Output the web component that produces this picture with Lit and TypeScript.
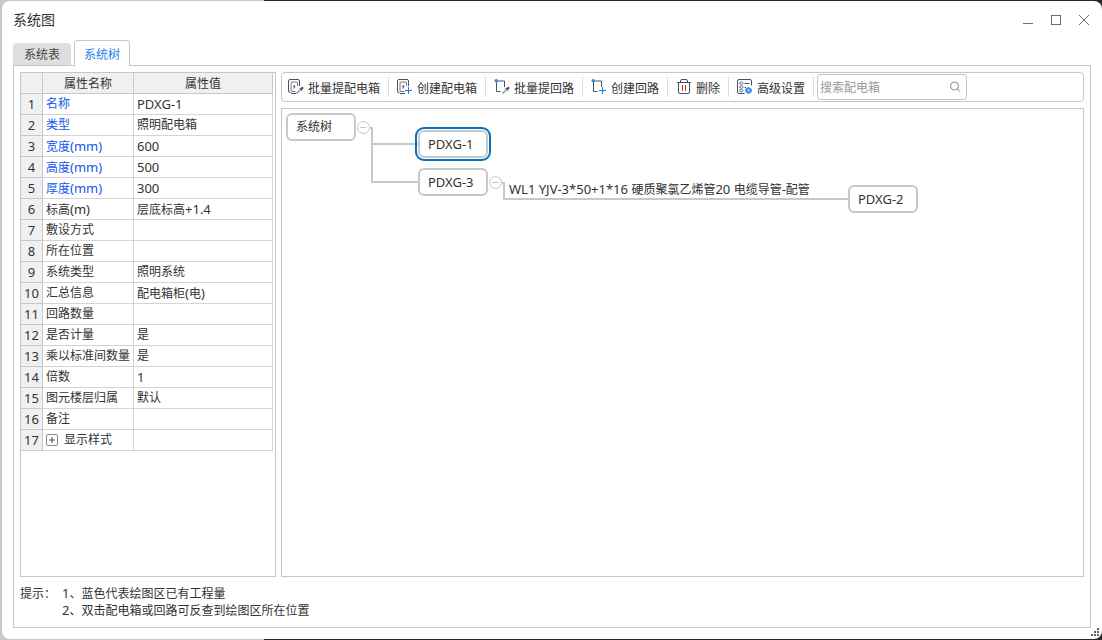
import { LitElement, html, svg, css } from "lit";
import { customElement, property, state } from "lit/decorators.js";

/** Splits mixed text so that Latin runs get their own, slightly larger size. */
function mixed(text: string) {
  return text
    .split(/([\x20-\x7e]+)/)
    .filter((part) => part !== "")
    .map((part) => (/^[\x20-\x7e]/.test(part) ? html`<span class="latin">${part}</span>` : part));
}

const latin = css`
  .latin {
    font-size: 13px;
  }
`;

interface PropertyRow {
  name: string;
  value: string;
  key?: boolean;
  group?: boolean;
}

const rows: PropertyRow[] = [
  { name: "名称", value: "PDXG-1", key: true },
  { name: "类型", value: "照明配电箱", key: true },
  { name: "宽度(mm)", value: "600", key: true },
  { name: "高度(mm)", value: "500", key: true },
  { name: "厚度(mm)", value: "300", key: true },
  { name: "标高(m)", value: "层底标高+1.4" },
  { name: "敷设方式", value: "" },
  { name: "所在位置", value: "" },
  { name: "系统类型", value: "照明系统" },
  { name: "汇总信息", value: "配电箱柜(电)" },
  { name: "回路数量", value: "" },
  { name: "是否计量", value: "是" },
  { name: "乘以标准间数量", value: "是" },
  { name: "倍数", value: "1" },
  { name: "图元楼层归属", value: "默认" },
  { name: "备注", value: "" },
  { name: "显示样式", value: "", group: true },
];

const boxShape = svg`
  <path d="M2.5 13.5H2Q.5 13.5 .5 12V2Q.5 .5 2 .5H10Q11.5 .5 11.5 2V7M3 14.5H8" />
  <path class="thin" d="M7.5 12.5H4Q3 12.5 3 11.5V4Q3 3 4 3H8.5Q9.5 3 9.5 4V7" />
  <path class="solid" d="M6.8 5.2 4.6 8H6L5.4 10.4 7.8 7.4H6.4Z" />`;
const circuitShape = svg`
  <path d="M2.5 2H10.5V8M2.5 2V12.5H6.5" />
  <circle class="dot" cx="2.2" cy="1.8" r="1.8" />`;
const picker = svg`
  <path class="grey" d="M8.4 14.6 12 11" />
  <path class="solid" d="M10.4 8.8 12.2 9.4 14.2 7.4 15.8 9 13.8 11 14.4 12.8Z" />`;
const plus = svg`<path class="blue" d="M11.5 8V15M8 11.5H15" />`;

const icons = {
  pickBox: svg`${boxShape}${picker}`,
  newBox: svg`${boxShape}${plus}`,
  pickCircuit: svg`${circuitShape}${picker}`,
  newCircuit: svg`${circuitShape}${plus}`,
  remove: svg`
    <path d="M1 3.5H15M4.5 3.5V2Q4.5 .5 6 .5H10Q11.5 .5 11.5 2V3.5M2.5 3.5V13Q2.5 14.5 4 14.5H12Q13.5 14.5 13.5 13V3.5" />
    <path class="red" d="M6.5 6V12M9.5 6V12" />`,
  settings: svg`
    <path d="M7.5 14.5H2Q.5 14.5 .5 13V2Q.5 .5 2 .5H13Q14.5 .5 14.5 2V6.5" />
    <path d="M7.5 4.5H12.5M7.5 8.5H9" />
    <ellipse class="thin" cx="4.3" cy="4.2" rx="1.8" ry="1.2" />
    <ellipse class="thin" cx="4.3" cy="8" rx="1.8" ry="1.2" />
    <ellipse class="thin" cx="4.3" cy="11.6" rx="1.8" ry="1.2" />
    <path class="gear" d="M11.5 8.4 14.2 10V13L11.5 14.6 8.8 13V10Z" />
    <circle class="hole" cx="11.5" cy="11.5" r="1.2" />`,
};

const actions: { label: string; icon: keyof typeof icons }[] = [
  { label: "批量提配电箱", icon: "pickBox" },
  { label: "创建配电箱", icon: "newBox" },
  { label: "批量提回路", icon: "pickCircuit" },
  { label: "创建回路", icon: "newCircuit" },
  { label: "删除", icon: "remove" },
  { label: "高级设置", icon: "settings" },
];

@customElement("property-grid")
export class PropertyGrid extends LitElement {
  static styles = [
    latin,
    css`
      :host {
        display: block;
        border: 1px solid #c4c6ca;
      }
      .grid {
        width: 252px;
        table-layout: fixed;
        border-collapse: separate;
        border-spacing: 0;
        line-height: 18px;
      }
      .col-index {
        width: 22px;
      }
      .col-name {
        width: 91px;
      }
      .cell {
        height: 20px;
        padding: 0 0 0 3px;
        border-right: 1px solid #d4d4d4;
        border-bottom: 1px solid #d4d4d4;
        text-align: left;
        font-weight: 400;
        white-space: nowrap;
      }
      .head,
      .index {
        padding: 0;
        background: #f0f0f0;
        border-color: #c8c8c8;
        text-align: center;
      }
      .head {
        padding-top: 2px;
        height: 18px;
      }
      .key {
        color: #1456f0;
      }
      .group {
        display: flex;
        align-items: center;
        gap: 6px;
      }
      .expand {
        box-sizing: border-box;
        width: 12px;
        height: 12px;
        padding: 0;
        border: 1px solid #8a8a8a;
        border-radius: 2px;
        background: #fff;
        display: grid;
        place-items: center;
      }
      .expand-icon {
        display: block;
        width: 6px;
        height: 6px;
        stroke: #444;
      }
    `,
  ];

  render() {
    return html`
      <table class="grid">
        <colgroup>
          <col class="col-index" />
          <col class="col-name" />
          <col />
        </colgroup>
        <thead>
          <tr>
            <td class="cell head"></td>
            <th class="cell head" scope="col">属性名称</th>
            <th class="cell head" scope="col">属性值</th>
          </tr>
        </thead>
        <tbody>
          ${rows.map(
            (row, i) => html`<tr>
              <td class="cell index">${mixed(String(i + 1))}</td>
              <th class="cell ${row.key ? "key" : ""}" scope="row">
                ${row.group
                  ? html`<span class="group"
                      ><button class="expand" aria-label="展开">
                        <svg class="expand-icon" viewBox="0 0 6 6"><path d="M0 3H6M3 0V6" /></svg></button
                      >${row.name}</span
                    >`
                  : mixed(row.name)}
              </th>
              <td class="cell">${mixed(row.value)}</td>
            </tr>`
          )}
        </tbody>
      </table>
    `;
  }
}

@customElement("tool-bar")
export class ToolBar extends LitElement {
  static styles = css`
    :host {
      display: flex;
      align-items: center;
      box-sizing: border-box;
      height: 30px;
      border: 1px solid #c4c6ca;
      border-radius: 4px;
    }
    .action {
      display: flex;
      align-items: center;
      gap: 4px;
      height: 20px;
      padding: 0 8px;
      border: 0;
      border-right: 1px solid #dcdcdc;
      background: none;
      color: inherit;
      font: inherit;
      white-space: nowrap;
    }
    .action:first-child {
      padding-left: 6px;
    }
    .label {
      padding-top: 2px;
    }
    .icon {
      width: 16px;
      height: 16px;
      fill: none;
      stroke: #4a5068;
    }
    .icon .thin {
      stroke-width: 0.8;
    }
    .icon .solid {
      fill: #4a5068;
      stroke: none;
    }
    .icon .grey {
      stroke: #a8acb8;
      stroke-width: 2;
    }
    .icon .blue {
      stroke: #1a7ae6;
    }
    .icon .red {
      stroke: #e02020;
    }
    .icon .dot {
      fill: #2d8cf0;
      stroke: none;
    }
    .icon .gear {
      fill: #3a8ee8;
      stroke: #3a8ee8;
    }
    .icon .hole {
      fill: #a8d0f8;
      stroke: none;
    }
    .search {
      display: flex;
      align-items: center;
      box-sizing: border-box;
      width: 150px;
      height: 26px;
      margin-left: 3px;
      padding: 0 5px 0 2px;
      border: 1px solid #c4c6ca;
      border-radius: 3px;
    }
    .field {
      flex: 1;
      min-width: 0;
      padding: 0;
      border: 0;
      outline: 0;
      background: none;
      color: inherit;
      font: inherit;
    }
    .field::placeholder {
      color: #999;
    }
    .lens {
      width: 12px;
      height: 12px;
      fill: none;
      stroke: #8a8a8a;
    }
  `;

  render() {
    return html`
      ${actions.map(
        (a) => html`<button class="action">
          <svg class="icon" viewBox="0 0 16 16" aria-hidden="true">${icons[a.icon]}</svg
          ><span class="label">${a.label}</span>
        </button>`
      )}
      <label class="search">
        <input class="field" type="text" placeholder="搜索配电箱" aria-label="搜索配电箱" />
        <svg class="lens" viewBox="0 0 12 12" aria-hidden="true">
          <circle cx="5.5" cy="5" r="4" />
          <path d="M8.3 8 11 10.8" />
        </svg>
      </label>
    `;
  }
}

@customElement("tree-node")
export class TreeNode extends LitElement {
  @property() label = "";
  @property({ type: Boolean }) selected = false;

  static styles = [
    latin,
    css`
      :host {
        display: block;
      }
      .node {
        display: block;
        box-sizing: border-box;
        width: 70px;
        height: 28px;
        padding: 0 8px;
        border: 2px solid #c8c8c8;
        border-radius: 6px;
        background: #fff;
        color: inherit;
        font: inherit;
        line-height: 24px;
        text-align: left;
        white-space: nowrap;
      }
      .selected {
        outline: 2px solid #0070c0;
        outline-offset: 1px;
      }
    `,
  ];

  render() {
    return html`<button class="node ${this.selected ? "selected" : ""}">${mixed(this.label)}</button>`;
  }
}

@customElement("system-tree")
export class SystemTree extends LitElement {
  static styles = [
    latin,
    css`
      :host {
        display: block;
        position: relative;
        border: 1px solid #c4c6ca;
        overflow: hidden;
      }
      .links {
        position: absolute;
        left: 0;
        top: 0;
        width: 640px;
        height: 120px;
        fill: none;
        stroke: #c8c8c8;
      }
      .links .wire {
        stroke-width: 2;
      }
      .at-root,
      .at-first,
      .at-third,
      .at-second,
      .circuit {
        position: absolute;
      }
      .at-root {
        left: 4px;
        top: 4px;
      }
      .at-first {
        left: 136px;
        top: 21px;
      }
      .at-third {
        left: 136px;
        top: 59px;
      }
      .at-second {
        left: 566px;
        top: 76px;
      }
      .circuit {
        left: 227px;
        top: 70px;
        line-height: 20px;
        white-space: nowrap;
      }
    `,
  ];

  render() {
    return html`
      <svg class="links" viewBox="0 0 640 120" aria-hidden="true">
        <path class="wire" d="M88 19H90V73H136M90 35H136" />
        <path class="wire" d="M220 74H222V90H566" />
        <circle cx="81.5" cy="18.5" r="6" />
        <path d="M78 18.5H85" />
        <circle cx="213.5" cy="73.5" r="6" />
        <path d="M210 73.5H217" />
      </svg>
      <tree-node class="at-root" label="系统树"></tree-node>
      <tree-node class="at-first" label="PDXG-1" selected></tree-node>
      <tree-node class="at-third" label="PDXG-3"></tree-node>
      <span class="circuit">${mixed("WL1 YJV-3*50+1*16 硬质聚氯乙烯管20 电缆导管-配管")}</span>
      <tree-node class="at-second" label="PDXG-2"></tree-node>
    `;
  }
}

@customElement("app-root")
export class AppRoot extends LitElement {
  @state() private tab = 1;

  static styles = [
    latin,
    css`
      :host {
        display: block;
        box-sizing: border-box;
        height: 100vh;
        padding: 1px 0 1px 2px;
        background:
          linear-gradient(#c9c9c9, #c9c9c9) left / 264px 100% no-repeat,
          #2a2628;
        color: #333;
        font: 12px/17px "Noto Sans", "Noto Sans CJK SC", sans-serif;
      }
      .window {
        position: relative;
        display: flex;
        flex-direction: column;
        box-sizing: border-box;
        height: 100%;
        padding: 0 11px 11px;
        border-radius: 8px;
        background: #fff;
      }
      .titlebar {
        display: flex;
        align-items: center;
        justify-content: space-between;
        height: 38px;
        padding-bottom: 1px;
        box-sizing: border-box;
        margin-bottom: 1px;
      }
      .title {
        margin: 0;
        font-size: 14px;
        font-weight: 400;
      }
      .controls {
        display: flex;
        gap: 12px;
      }
      .control {
        width: 16px;
        height: 16px;
        padding: 0;
        border: 0;
        background: none;
      }
      .glyph {
        display: block;
        width: 16px;
        height: 16px;
        fill: none;
        stroke: #6e6e6e;
      }
      .tabs {
        display: flex;
        align-items: flex-end;
        gap: 3px;
        height: 26px;
        margin-bottom: -1px;
        z-index: 1;
      }
      .tab {
        box-sizing: border-box;
        height: 22px;
        margin-bottom: 1px;
        padding: 1px 11px 0;
        border: 0;
        border-radius: 4px 4px 0 0;
        background: #dedede;
        color: #444;
        font: inherit;
      }
      .tab.active {
        height: 26px;
        margin-bottom: 0;
        padding: 1px 9px 0;
        border: 1px solid #c4c6ca;
        border-bottom: 0;
        background: #fff;
        color: #1e7fe8;
      }
      .panel {
        flex: 1;
        display: flex;
        flex-direction: column;
        min-height: 0;
        padding: 6px;
        border: 1px solid #c4c6ca;
      }
      .body {
        flex: 1;
        display: grid;
        grid-template-columns: 256px minmax(0, 1fr);
        gap: 5px;
        min-height: 0;
      }
      .main {
        display: flex;
        flex-direction: column;
        gap: 6px;
      }
      .tree {
        flex: 1;
      }
      .hints {
        display: flex;
        gap: 6px;
        padding: 8px 0 2px;
      }
      .hint-list {
        margin: 0;
        padding: 0;
        list-style: none;
      }
      .grip {
        position: absolute;
        right: 3px;
        bottom: 3px;
        width: 8px;
        height: 8px;
        fill: #5a5f6b;
      }
    `,
  ];

  render() {
    return html`
      <div class="window">
        <header class="titlebar">
          <h1 class="title">系统图</h1>
          <div class="controls">
            <button class="control" aria-label="最小化">
              <svg class="glyph" viewBox="0 0 16 16"><path d="M4 11.5H14" /></svg>
            </button>
            <button class="control" aria-label="最大化">
              <svg class="glyph" viewBox="0 0 16 16"><rect x="4.5" y="3.5" width="9" height="9" /></svg>
            </button>
            <button class="control" aria-label="关闭">
              <svg class="glyph" viewBox="0 0 16 16"><path d="M4 3 14 13M14 3 4 13" /></svg>
            </button>
          </div>
        </header>
        <div class="tabs" role="tablist">
          ${["系统表", "系统树"].map(
            (name, i) => html`<button
              class="tab ${i === this.tab ? "active" : ""}"
              role="tab"
              aria-selected=${i === this.tab}
              @click=${() => (this.tab = i)}
            >
              ${name}
            </button>`
          )}
        </div>
        <main class="panel">
          <div class="body">
            <property-grid></property-grid>
            <section class="main">
              <tool-bar></tool-bar>
              <system-tree class="tree"></system-tree>
            </section>
          </div>
          <footer class="hints">
            <span>提示：</span>
            <ul class="hint-list">
              <li>${mixed("1、蓝色代表绘图区已有工程量")}</li>
              <li>${mixed("2、双击配电箱或回路可反查到绘图区所在位置")}</li>
            </ul>
          </footer>
        </main>
        <svg class="grip" viewBox="0 0 8 8" aria-hidden="true">
          <path d="M6 0H8V2H6ZM3 3H5V5H3ZM6 3H8V5H6ZM0 6H2V8H0ZM3 6H5V8H3ZM6 6H8V8H6Z" />
        </svg>
      </div>
    `;
  }
}
